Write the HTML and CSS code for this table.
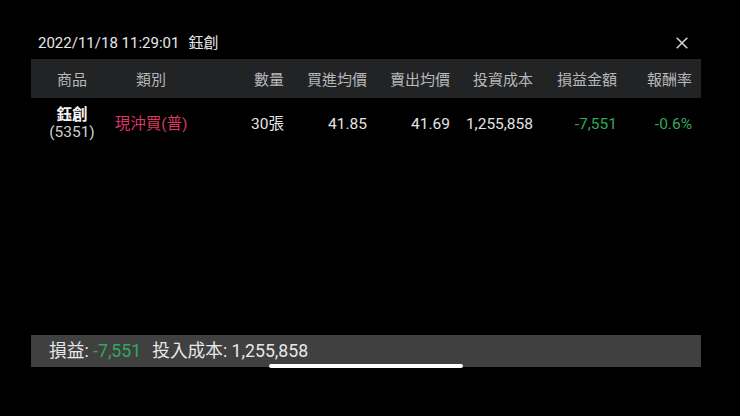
FILE: index.html
```html
<!DOCTYPE html>
<html lang="zh-Hant">
<head>
<meta charset="utf-8">
<link rel="stylesheet" href="styles.css">
</head>
<body>
<div class="screen">
  <div class="titlebar">
    <div class="title">2022/11/18 11:29:01<span class="title-name">鈺創</span></div>
    <svg class="close" width="12" height="12" viewBox="0 0 12 12"><path d="M0.7 0.7L11.3 11.3M11.3 0.7L0.7 11.3" stroke="#d8d8d8" stroke-width="1.5" fill="none"/></svg>
  </div>
  <div class="grid head">
    <div class="c">商品</div>
    <div class="c">類別</div>
    <div class="r">數量</div>
    <div class="r">買進均價</div>
    <div class="r">賣出均價</div>
    <div class="r">投資成本</div>
    <div class="r">損益金額</div>
    <div class="r">報酬率</div>
  </div>
  <div class="grid row">
    <div class="c stock"><span class="stock-name">鈺創</span><span class="stock-code">(5351)</span></div>
    <div class="c red">現沖買(普)</div>
    <div class="r">30張</div>
    <div class="r">41.85</div>
    <div class="r">41.69</div>
    <div class="r">1,255,858</div>
    <div class="r green">-7,551</div>
    <div class="r green">-0.6%</div>
  </div>
  <div class="summary">損益: <span class="green">-7,551</span><span class="sum-cost">投入成本: 1,255,858</span></div>
  <div class="home-pill"></div>
</div>
</body>
</html>
```
FILE: styles.css
```css
html, body {
  margin: 0;
  padding: 0;
  background: #000;
}
body {
  font-family: Roboto, "Noto Sans CJK TC", sans-serif;
  color: #e6e6e6;
}
.screen {
  position: relative;
  width: 740px;
  height: 416px;
  box-sizing: border-box;
  padding: 0 39px 0 31px;
  display: flex;
  flex-direction: column;
}
.titlebar {
  display: flex;
  justify-content: space-between;
  align-items: center;
  height: 20px;
  padding: 33px 13px 6px 7px;
}
.title {
  font-size: 15px;
  line-height: 20px;
  color: #e8e8e8;
}
.title-name {
  margin-left: 9px;
}
.close {
  display: block;
}
.grid {
  display: grid;
  grid-template-columns: 82px 76px 95px 83px 83px 83px 84px 75px;
  padding-right: 9px;
}
.head {
  height: 39px;
  background: #222325;
  align-items: center;
  font-size: 15px;
  color: #b8b8b8;
}
.c { text-align: center; }
.r { text-align: right; }
.row {
  align-items: center;
  font-size: 15.5px;
  color: #e4e4e4;
  padding-top: 9px;
  height: 34px;
}
.row > div {
  line-height: 17px;
}
.stock {
  display: flex;
  flex-direction: column;
  align-items: center;
}
.stock-name {
  font-weight: bold;
  color: #f4f4f4;
}
.stock-code {
  color: #cfcfcf;
}
.red { color: #d93761; }
.green { color: #31a85b; }
.summary {
  margin-top: auto;
  margin-bottom: 49px;
  height: 32px;
  line-height: 32px;
  background: #404040;
  padding-left: 18px;
  font-size: 17.7px;
  color: #e8e8e8;
}
.sum-cost {
  margin-left: 11px;
}
.home-pill {
  position: absolute;
  left: 269px;
  top: 364px;
  width: 194px;
  height: 4px;
  border-radius: 2px;
  background: #fff;
}
```
